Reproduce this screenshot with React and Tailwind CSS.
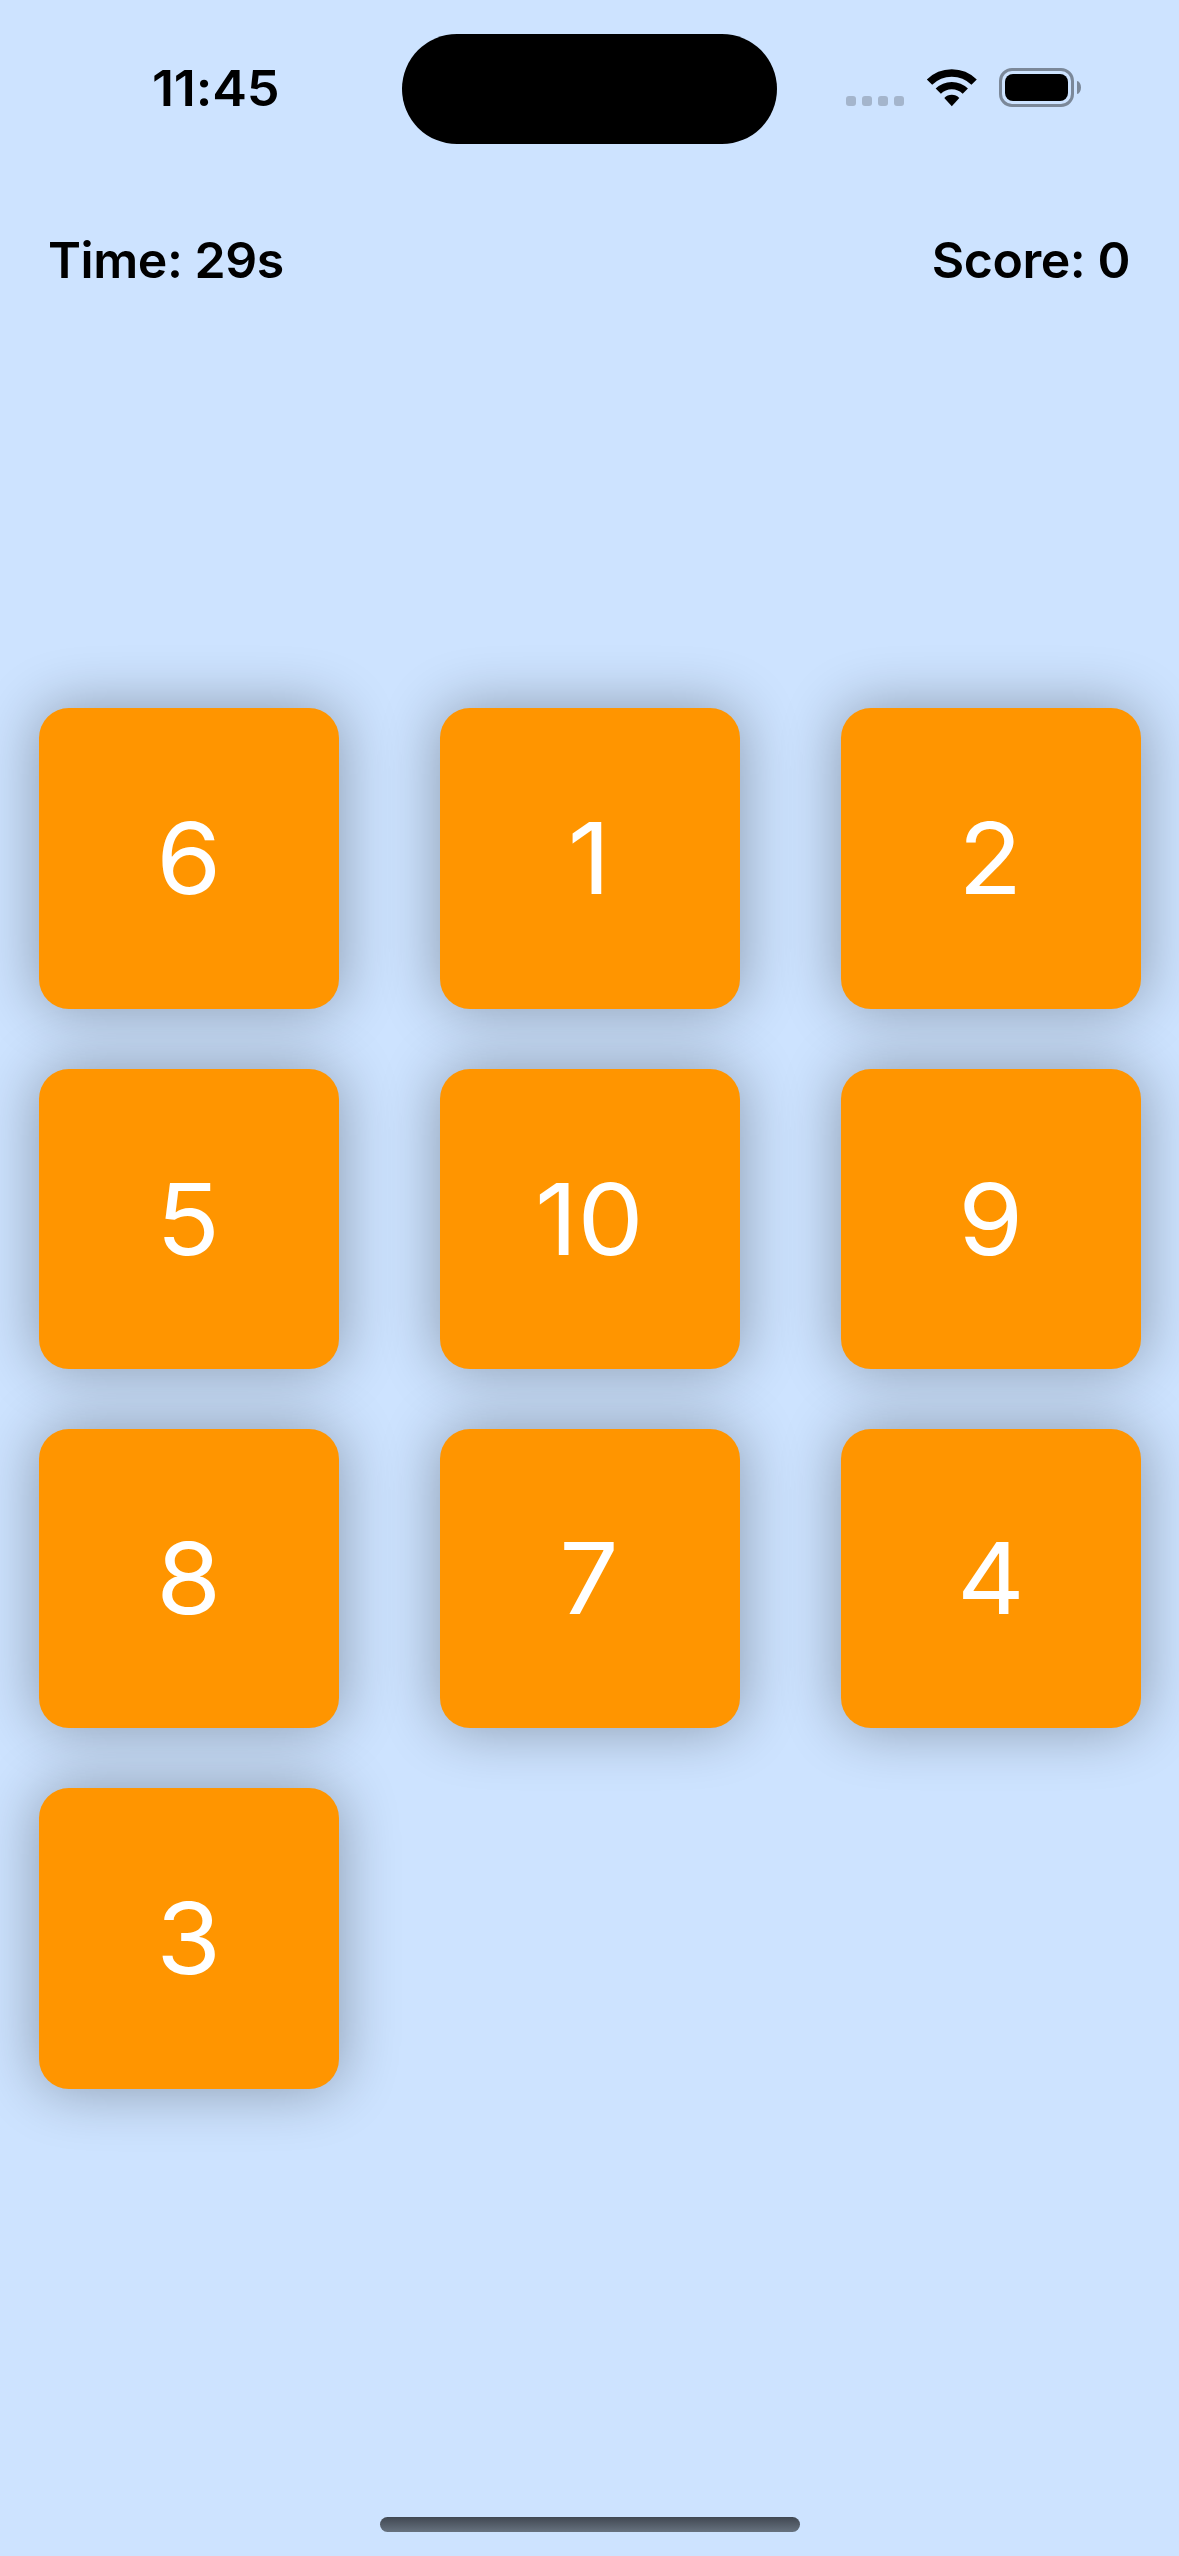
const tiles = [6, 1, 2, 5, 10, 9, 8, 7, 4, 3];

function WifiIcon() {
  return (
    <svg width="52" height="38" viewBox="0 0 52 38" fill="none">
      <path d="M3.500 13.100 A31.700 31.700 0 0 1 48.100 13.100" stroke="black" strokeWidth="7.600" />
      <path d="M12.300 22.200 A19.100 19.100 0 0 1 39.300 22.200" stroke="black" strokeWidth="7.400" />
      <path d="M25.800 37.200 L18.300 29 A10.500 10.500 0 0 1 33.300 29 Z" fill="black" />
    </svg>
  );
}

function StatusBar() {
  return (
    <div className="flex h-[177px] items-start">
      <div className="flex h-[177px] w-[402px] pt-[58px] pl-[152px] text-[49.5px] leading-[60px] font-semibold tracking-[-0.2px]">
        <span className="origin-left scale-x-[1.055]">11:45</span>
      </div>
      <div className="mt-[34px] h-[110px] w-[375px] rounded-full bg-black" />
      <div className="flex flex-1 items-start pt-[68px] pl-[69px]">
        <div className="mt-[28px] flex gap-[6px]">
          {[0, 1, 2, 3].map((i) => (
            <span key={i} className="size-[10px] rounded-[3px] bg-[#a4b5cc]" />
          ))}
        </div>
        <div className="ml-[22px] pt-px">
          <WifiIcon />
        </div>
        <div className="ml-[21px] flex items-center">
          <div className="h-[39px] w-[75px] rounded-[13px] border-3 border-[#7b8899] p-[3px]">
            <div className="h-[27px] w-[63px] rounded-[8px] bg-black" />
          </div>
          <div className="ml-[3px] h-[13px] w-[4px] rounded-[0_100%_100%_0/0_50%_50%_0] bg-[#7b8899]" />
        </div>
      </div>
    </div>
  );
}

export default function App() {
  return (
    <main className="flex h-[2556px] w-[1179px] flex-col overflow-hidden bg-[#cde3ff] font-['Inter',sans-serif] text-black">
      <StatusBar />
      <header className="flex h-[531px] items-start justify-between pr-[49px] pl-[48px] pt-[53px] text-[50px] leading-[60px] font-semibold tracking-[-0.45px]">
        <span>Time: 29s</span>
        <span>Score: 0</span>
      </header>
      <section className="grid grid-cols-[repeat(3,300px)] grid-rows-[301px_300px_299px_301px] gap-x-[101px] gap-y-[60px] pl-[39px]">
        {tiles.map((n) => (
          <button
            key={n}
            className="flex items-center justify-center rounded-[30px] bg-[#ff9500] pr-px text-[99px] leading-none text-white shadow-[0_0_60px_rgba(0,0,0,0.33)]"
          >
            <span className="scale-x-[1.06]">{n}</span>
          </button>
        ))}
      </section>
      <div className="mt-auto mb-[24px] h-[15px] w-[420px] self-center rounded-full bg-linear-to-b from-[#414852] to-[#67727f]" />
    </main>
  );
}
